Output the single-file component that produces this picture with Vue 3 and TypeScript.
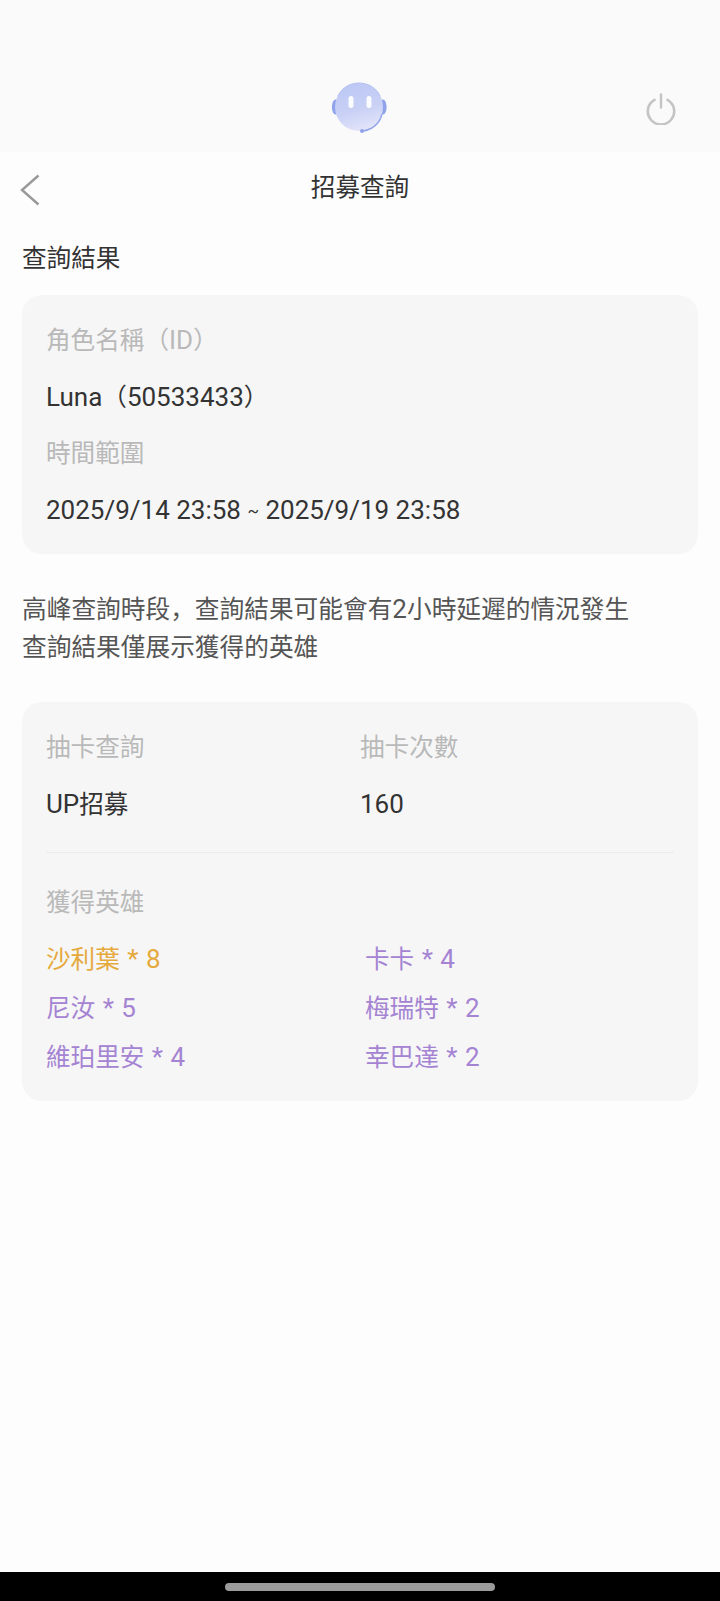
<template>
  <div class="page">
    <header class="top-bar">
      <svg class="bot" viewBox="0 0 56 56" width="56" height="56">
        <defs>
          <linearGradient id="botFace" x1="0.3" y1="0" x2="0.6" y2="1">
            <stop offset="0" stop-color="#bcc8f5" />
            <stop offset="0.55" stop-color="#c8d0f5" />
            <stop offset="1" stop-color="#e3e5f9" />
          </linearGradient>
          <filter id="soft" x="-50%" y="-50%" width="200%" height="200%">
            <feGaussianBlur stdDeviation="0.7" />
          </filter>
        </defs>
        <ellipse cx="4.5" cy="27" rx="3.6" ry="7.5" fill="#8fa2ea" />
        <ellipse cx="52" cy="27" rx="3.6" ry="7.5" fill="#8fa2ea" />
        <circle cx="28" cy="27" r="24" fill="url(#botFace)" />
        <path d="M7 16C11 7 20 3 28 3s17 4 21 13" fill="none" stroke="#b4c0f2" stroke-width="1" />
        <path d="M51 34c-2 10-11 16-19 17" fill="none" stroke="#8fa2ea" stroke-width="1.3" />
        <circle cx="31" cy="51" r="2" fill="#8fa2ea" />
        <rect x="17.5" y="16" width="5" height="12" rx="2.5" fill="#fbfcff" filter="url(#soft)" />
        <rect x="35.5" y="16" width="5" height="12" rx="2.5" fill="#fbfcff" filter="url(#soft)" />
      </svg>
      <svg class="power" viewBox="0 0 32 32" width="32" height="32">
        <path d="M9.5 6.8a13.2 13.2 0 1 0 13 0" fill="none" stroke="#c4c4c4" stroke-width="2.6" stroke-linecap="round" />
        <path d="M16 1.5v13" fill="none" stroke="#c4c4c4" stroke-width="2.4" stroke-linecap="round" />
      </svg>
    </header>

    <main class="content">
      <div class="nav">
        <svg class="back" viewBox="0 0 20 32" width="20" height="32">
          <path d="M18.5 1.5 2 16l16.5 14.5" fill="none" stroke="#999" stroke-width="2.4" />
        </svg>
        <h1>招募查詢</h1>
      </div>

      <h2 class="section-title">查詢結果</h2>

      <section class="card info-card">
        <div class="label">角色名稱（<span class="latin">ID</span>）</div>
        <div class="value"><span class="latin">Luna</span>（<span class="latin">50533433</span>）</div>
        <div class="label">時間範圍</div>
        <div class="value latin">2025/9/14 23:58 <span class="tilde">~</span> 2025/9/19 23:58</div>
      </section>

      <p class="notice">
        高峰查詢時段，查詢結果可能會有<span class="latin">2</span>小時延遲的情況發生<br />
        查詢結果僅展示獲得的英雄
      </p>

      <section class="card result-card">
        <div class="summary">
          <div>
            <div class="label">抽卡查詢</div>
            <div class="value"><span class="latin">UP</span>招募</div>
          </div>
          <div>
            <div class="label">抽卡次數</div>
            <div class="value latin">160</div>
          </div>
        </div>
        <div class="divider"></div>
        <div class="label">獲得英雄</div>
        <ul class="heroes">
          <li v-for="hero in heroes" :key="hero.name" :class="hero.rarity">
            {{ hero.name }}<span class="latin count"> * {{ hero.count }}</span>
          </li>
        </ul>
      </section>
    </main>

    <footer class="gesture-bar">
      <span></span>
    </footer>
  </div>
</template>

<script setup lang="ts">
interface Hero {
  name: string
  count: number
  rarity: 'gold' | 'purple'
}

const heroes: Hero[] = [
  { name: '沙利葉', count: 8, rarity: 'gold' },
  { name: '卡卡', count: 4, rarity: 'purple' },
  { name: '尼汝', count: 5, rarity: 'purple' },
  { name: '梅瑞特', count: 2, rarity: 'purple' },
  { name: '維珀里安', count: 4, rarity: 'purple' },
  { name: '幸巴達', count: 2, rarity: 'purple' }
]
</script>

<style>
body {
  margin: 0;
  background: #fdfdfd;
}
</style>

<style scoped>
.page {
  display: flex;
  flex-direction: column;
  height: 1601px;
  overflow: hidden;
  background: #fdfdfd;
  color: #333;
  font-family: Roboto, "Noto Sans CJK SC", sans-serif;
  font-size: 24.6px;
}

/* digits and latin run a bit larger than the CJK around them */
.latin {
  font-size: 26px;
  line-height: 1;
}

.count {
  word-spacing: 1px;
}

.tilde {
  font-size: 17px;
  vertical-align: 2px;
}

.top-bar {
  position: relative;
  flex: none;
  height: 152px;
  background: #fafafa;
}

.bot {
  position: absolute;
  left: 331px;
  top: 80px;
}

.power {
  position: absolute;
  left: 645px;
  top: 93px;
}

.content {
  flex: 1;
  padding: 0 22px;
}

.nav {
  position: relative;
  display: flex;
  justify-content: center;
  align-items: center;
  height: 70px;
}

.nav h1 {
  margin: 0;
  font-size: 24.6px;
  font-weight: 400;
  line-height: 33px;
}

.back {
  position: absolute;
  left: -2px;
  top: 22px;
}

.section-title {
  margin: 20px 0 0;
  font-size: 24.6px;
  font-weight: 400;
  line-height: 33px;
}

.card {
  background: #f6f6f6;
  border-radius: 20px;
  padding: 29px 24px 26px;
}

.info-card {
  margin-top: 20px;
}

.label {
  color: #b9b9b9;
  line-height: 33px;
}

.value {
  margin-top: 24px;
  line-height: 33px;
}

.info-card .value + .label {
  margin-top: 23px;
}

.notice {
  margin: 37px 0 0;
  color: #555;
  font-size: 24.7px;
  line-height: 38px;
}

.result-card {
  margin-top: 35px;
  padding-bottom: 27px;
}

.summary {
  display: grid;
  grid-template-columns: 314px 1fr;
}

.divider {
  height: 1px;
  margin: 31px 0 33px;
  background: #ececec;
}

.heroes {
  display: grid;
  grid-template-columns: 319px 1fr;
  row-gap: 16px;
  margin: 24px 0 0;
  padding: 0;
  list-style: none;
  line-height: 33px;
}

.gold {
  color: #e5a93c;
}

.purple {
  color: #a583d3;
}

.gesture-bar {
  flex: none;
  height: 29px;
  display: flex;
  justify-content: center;
  padding-top: 11px;
  box-sizing: border-box;
  background: #000;
}

.gesture-bar span {
  width: 270px;
  height: 8px;
  border-radius: 4px;
  background: #9b9b9b;
}
</style>
